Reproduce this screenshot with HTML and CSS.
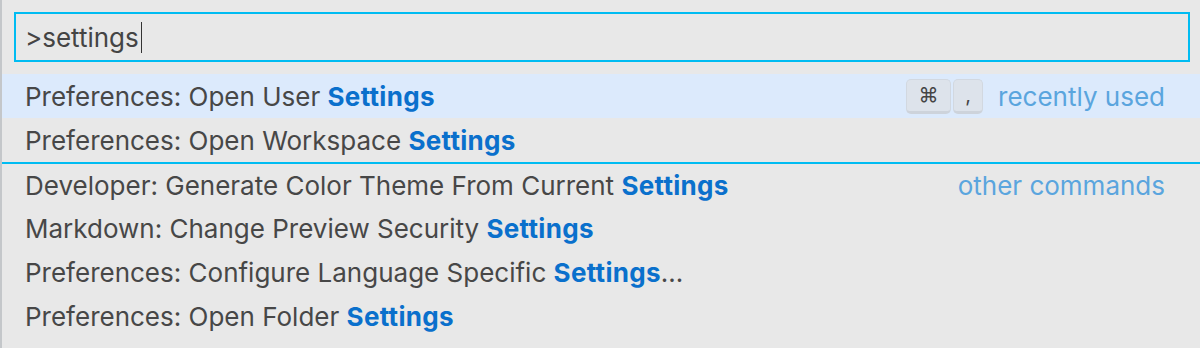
FILE: index.html
```html
<!DOCTYPE html>
<html>
<head>
<meta charset="utf-8">
<link rel="stylesheet" href="styles.css">
</head>
<body>
<div class="frame">
  <div class="edge"></div>
  <div class="widget">
    <div class="input"><span class="query">&gt;settings</span><span class="caret"></span></div>
    <div class="list">
      <div class="row active">
        <span class="label">Preferences: Open User <b>Settings</b></span>
        <span class="keys"><span class="key">⌘</span><span class="key comma">,</span></span>
        <span class="group">recently used</span>
      </div>
      <div class="row">
        <span class="label">Preferences: Open Workspace <b>Settings</b></span>
      </div>
      <div class="row sep">
        <span class="label">Developer: Generate Color Theme From Current <b>Settings</b></span>
        <span class="group">other commands</span>
      </div>
      <div class="row">
        <span class="label">Markdown: Change Preview Security <b>Settings</b></span>
      </div>
      <div class="row">
        <span class="label">Preferences: Configure Language Specific <b>Settings</b>...</span>
      </div>
      <div class="row">
        <span class="label">Preferences: Open Folder <b>Settings</b></span>
      </div>
    </div>
  </div>
</div>
</body>
</html>
```

FILE: styles.css
```css
html, body {
  margin: 0;
  padding: 0;
  background: #e8e8e8;
}
.frame {
  display: flex;
  width: 1200px;
  height: 348px;
  overflow: hidden;
  font-family: "Inter", "Noto Sans", sans-serif;
  font-size: 26px;
  color: #474747;
}
.edge {
  width: 2px;
  background: #c4c7ca;
  flex: none;
}
.widget {
  flex: 1;
  padding-top: 12px;
  background: #e8e8e8;
}
.input {
  margin: 0 10px 0 12px;
  height: 46px;
  border: 2px solid #00bcf2;
  display: flex;
  align-items: center;
  padding-left: 9px;
}
.query {
  color: #444;
}
.caret {
  width: 1.5px;
  height: 31px;
  background: #333;
  margin-left: 2px;
}
.list {
  margin-top: 12px;
}
.row {
  height: 44px;
  display: flex;
  align-items: center;
  padding: 0 35px 0 23px;
  box-sizing: border-box;
}
.row.active {
  background: #dceafc;
}
.row.sep {
  border-top: 2px solid #00bcf2;
}
.label {
  flex: 1;
  white-space: nowrap;
}
.label b {
  color: #0a70cc;
  font-weight: 700;
  letter-spacing: 0.3px;
}
.keys {
  display: flex;
  gap: 2px;
  margin-right: 15px;
}
.key {
  height: 35px;
  min-width: 30px;
  padding: 0 7px;
  box-sizing: border-box;
  background: #dde3eb;
  border: 1px solid #d2d8e0;
  border-bottom: 3px solid #cdd3db;
  border-radius: 5px;
  display: flex;
  align-items: center;
  justify-content: center;
  font-size: 20px;
  color: #444;
}
.key:first-child {
  width: 45px;
}
.key.comma {
  align-items: flex-end;
  padding-bottom: 4px;
}
.group {
  color: #5aa5de;
}
```
